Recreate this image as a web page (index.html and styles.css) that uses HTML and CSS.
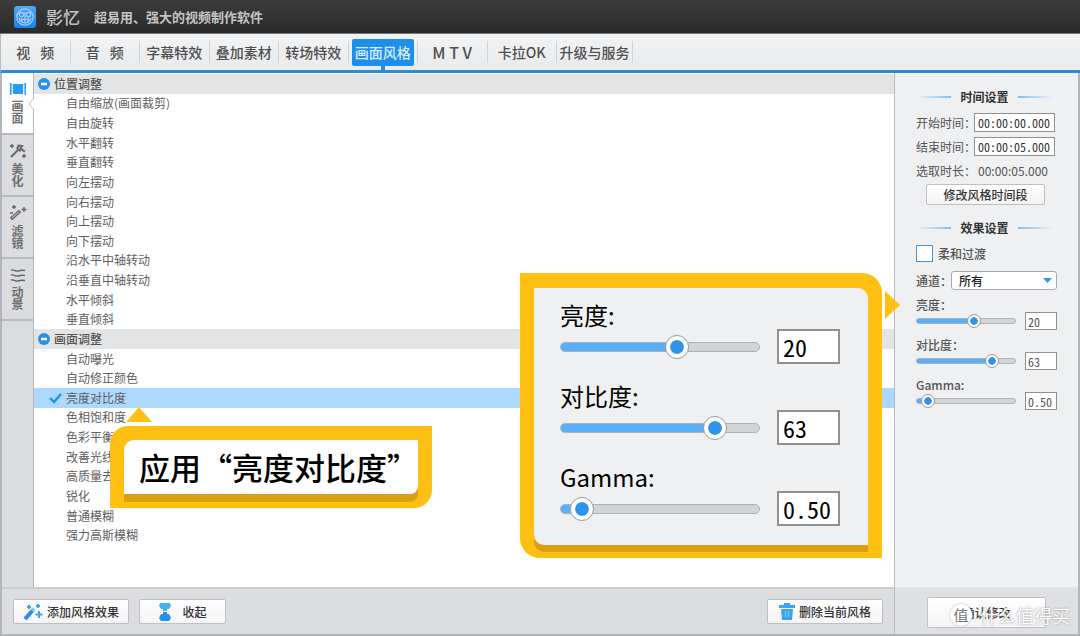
FILE: index.html
```html
<!DOCTYPE html>
<html lang="zh-CN">
<head>
<meta charset="utf-8">
<title>影忆</title>
<link rel="stylesheet" href="styles.css">
</head>
<body>
<div class="window">
  <header class="titlebar">
    <svg class="logo" viewBox="0 0 22 22" aria-hidden="true">
      <defs><linearGradient id="lg" x1="0" y1="0" x2="0" y2="1"><stop offset="0" stop-color="#4fa5f8"/><stop offset="1" stop-color="#1c82ee"/></linearGradient></defs>
      <rect width="22" height="22" rx="3" fill="url(#lg)"/>
      <g fill="none" stroke="#a5d3ff" stroke-width="1.2">
        <circle cx="11" cy="11" r="8.2"/>
        <circle cx="7.6" cy="8.6" r="2.2"/><circle cx="14.4" cy="8.6" r="2.2"/>
        <path d="M7 13.5h8M8 12v4M14 12v4M11 6v10M5 12c1 3 3 5 6 5s5-2 6-5"/>
      </g>
    </svg>
    <span class="brand">影忆</span>
    <span class="tagline">超易用、强大的视频制作软件</span>
  </header>

  <nav class="nav">
    <div class="nav-main">
      <button class="nav-item">视&ensp;&thinsp;频</button>
      <button class="nav-item">音&ensp;&thinsp;频</button>
      <button class="nav-item">字幕特效</button>
      <button class="nav-item">叠加素材</button>
      <button class="nav-item">转场特效</button>
      <button class="nav-item active"><span class="nav-pill">画面风格</span></button>
      <button class="nav-item">M&nbsp;T&nbsp;V</button>
      <button class="nav-item">卡拉OK</button>
    </div>
    <button class="nav-item nav-last">升级与服务</button>
  </nav>

  <div class="columns">
    <div class="left">
      <div class="work">
        <div class="sidebar">
          <button class="side-tab active">
            <svg width="18" height="14" viewBox="0 0 18 14" fill="#2b9af0" aria-hidden="true"><path d="M4 2h10v10H4zM1 1h1.500v12H1zM15.500 1H17v12h-1.500z"/><path d="M2.500 3h1M2.500 6h1M2.500 9h1M14.500 3h1M14.500 6h1M14.500 9h1" stroke="#2b9af0"/></svg>
            <span>画面</span>
          </button>
          <button class="side-tab">
            <svg width="18" height="16" viewBox="0 0 18 16" fill="none" stroke="#666" stroke-width="1.500" aria-hidden="true"><path d="m2 14 7-7" stroke-width="2"/><path d="M8 6l1.500-3.500L13 3l-1.500 2L14 7.500l2 1M8 6l4 2" stroke-width="2"/><path d="M3 1v4M1 3h4M15 11v4M13 13h4"/></svg>
            <span>美化</span>
          </button>
          <button class="side-tab">
            <svg width="18" height="16" viewBox="0 0 18 16" fill="none" stroke="#666" aria-hidden="true"><path d="m2 14 9-8" stroke-width="3.500"/><path d="m3 13 7-6.200" stroke="#ddd"/><path d="M5 0v4M3 2h4M15 2v5M12.500 4.500h5M1 8h3" stroke-width="1.400"/></svg>
            <span>滤镜</span>
          </button>
          <button class="side-tab">
            <svg width="18" height="14" viewBox="0 0 18 14" fill="none" stroke="#666" stroke-width="1.400" aria-hidden="true"><path d="M2 2c4-1 4 2 7 1s4-1 7-.5M2 7c4-1 4 2 7 1s4-1 7-.5M2 12c4-1 4 2 7 1s4-1 7-.5"/></svg>
            <span>动景</span>
          </button>
          <svg class="notch" viewBox="0 0 6 12" aria-hidden="true"><path d="M6 0 1 6l5 6" fill="#fff" stroke="#bbb"/></svg>
        </div>
        <div class="tree">
          <section class="group group-position">
            <h2 class="group-head"><svg class="minus" viewBox="0 0 12 12" aria-hidden="true"><circle cx="6" cy="6" r="6" fill="#2492e8"/><path d="M3 6h6" stroke="#fff" stroke-width="2.500"/></svg>位置调整</h2>
            <button class="row">自由缩放(画面裁剪)</button>
            <button class="row">自由旋转</button>
            <button class="row">水平翻转</button>
            <button class="row">垂直翻转</button>
            <button class="row">向左摆动</button>
            <button class="row">向右摆动</button>
            <button class="row">向上摆动</button>
            <button class="row">向下摆动</button>
            <button class="row">沿水平中轴转动</button>
            <button class="row">沿垂直中轴转动</button>
            <button class="row">水平倾斜</button>
            <button class="row">垂直倾斜</button>
          </section>
          <section class="group group-picture">
            <h2 class="group-head"><svg class="minus" viewBox="0 0 12 12" aria-hidden="true"><circle cx="6" cy="6" r="6" fill="#2492e8"/><path d="M3 6h6" stroke="#fff" stroke-width="2.500"/></svg>画面调整</h2>
            <button class="row">自动曝光</button>
            <button class="row">自动修正颜色</button>
            <button class="row selected"><svg class="tick" viewBox="0 0 13 12" aria-hidden="true"><path d="m1 6 4 4 7-8" fill="none" stroke="#1c92e4" stroke-width="2.400"/></svg>亮度对比度</button>
            <button class="row">色相饱和度</button>
            <button class="row">色彩平衡</button>
            <button class="row">改善光线</button>
            <button class="row">高质量去噪</button>
            <button class="row">锐化</button>
            <button class="row">普通模糊</button>
            <button class="row">强力高斯模糊</button>
          </section>
        </div>
      </div>
      <footer class="footer">
        <button class="btn btn-wide"><svg width="20" height="18" viewBox="0 0 20 18" aria-hidden="true"><path d="m2 16 8-9" stroke="#2a8be6" stroke-width="4"/><path d="m9 8 2-2.500" stroke="#7cc4fa" stroke-width="4"/><path d="M16 8v7M12.500 11.500h7M6 2v4M4 4h4M15 1v4M13 3h4" stroke="#3fa4f2" stroke-width="2"/></svg>添加风格效果</button>
        <button class="btn btn-fold"><svg width="14" height="18" viewBox="0 0 14 18" aria-hidden="true"><path d="M2 0h10l1 3-2 3H9v2H5V6H3L1 3z" fill="#48b0f4"/><path d="M5 9h4v2h2l2 4-2 3H3l-2-3 2-4h2z" fill="#2590ea"/></svg>收起</button>
        <button class="btn btn-wide btn-delete"><svg width="16" height="17" viewBox="0 0 16 17" aria-hidden="true"><path d="M5 0h6v2h5v3H0V2h5zM2 6h12l-1 11H3z" fill="#39a4f3"/><path d="M6.500 8v6M9.500 8v6" stroke="#8accfa"/></svg>删除当前风格</button>
      </footer>
    </div>

    <aside class="right">
      <form class="panel">
        <h3 class="section-title">时间设置</h3>
        <div class="time-row"><label for="start">开始时间：</label><input class="time" id="start" value="00:00:00.000"></div>
        <div class="time-row"><label for="end">结束时间：</label><input class="time" id="end" value="00:00:05.000"></div>
        <div class="time-row"><span>选取时长：</span><span class="duration">00:00:05.000</span></div>
        <button type="button" class="btn btn-range">修改风格时间段</button>
        <h3 class="section-title">效果设置</h3>
        <label class="soft"><input type="checkbox" class="check">柔和过渡</label>
        <div class="channel"><label for="channel">通道：</label><select id="channel"><option>所有</option></select></div>
        <div class="param">
          <label for="bright">亮度：</label>
          <input type="range" class="slider" id="bright" min="-100" max="100" value="20" style="--val:60%">
          <input class="num" aria-label="亮度值" value="20">
        </div>
        <div class="param">
          <label for="contrast">对比度：</label>
          <input type="range" class="slider" id="contrast" min="-100" max="100" value="63" style="--val:81%">
          <input class="num" aria-label="对比度值" value="63">
        </div>
        <div class="param">
          <label for="gamma">Gamma:</label>
          <input type="range" class="slider" id="gamma" min="0" max="10" step="0.1" value="0.5" style="--val:5%">
          <input class="num" aria-label="Gamma值" value="0.50">
        </div>
      </form>
      <div class="confirm">
        <button class="btn btn-confirm">确认修改</button>
        <div class="watermark"><span class="mark-dot">值</span>什么值得买</div>
      </div>
    </aside>
  </div>

  <div class="callout tip"><div class="tip-inner">应用“亮度对比度”</div></div>

  <div class="callout zoom">
    <div class="zoom-inner">
      <div class="param big">
        <label for="bright2">亮度:</label>
        <input type="range" class="slider" id="bright2" min="-100" max="100" value="20" style="--val:60%">
        <input class="num" aria-label="亮度值" value="20">
      </div>
      <div class="param big">
        <label for="contrast2">对比度:</label>
        <input type="range" class="slider" id="contrast2" min="-100" max="100" value="63" style="--val:81%">
        <input class="num" aria-label="对比度值" value="63">
      </div>
      <div class="param big">
        <label for="gamma2">Gamma:</label>
        <input type="range" class="slider" id="gamma2" min="0" max="10" step="0.1" value="0.5" style="--val:5%">
        <input class="num" aria-label="Gamma值" value="0.50">
      </div>
    </div>
  </div>
</div>
</body>
</html>
```
FILE: styles.css
```css
* { box-sizing: border-box; }

body {
  margin: 0;
  font-family: "Noto Sans CJK SC", sans-serif;
  font-size: 12px;
  color: #555;
}

button, input, select { font: inherit; color: inherit; margin: 0; padding: 0; }
button { border: 0; background: none; }
h2, h3 { margin: 0; font-size: 12px; }

.window {
  position: relative;
  display: flex;
  flex-direction: column;
  min-height: 100vh;
}

/* Title bar */
.titlebar {
  display: flex;
  align-items: center;
  height: 34px;
  padding: 0 14px;
  background: linear-gradient(#3c3c3c, #2a2a2a);
  border-bottom: 1px solid #777;
  color: #c4c4c4;
}
.logo { width: 22px; height: 22px; }
.brand { margin-left: 10px; font-size: 17px; font-weight: 500; }
.tagline { margin-left: 14px; font-size: 13px; font-weight: 700; }

/* Navigation */
.nav {
  display: flex;
  align-items: center;
  height: 39px;
  background: linear-gradient(#f2f3f5, #e9eaec);
  border-left: 1px solid #bbb;
  border-bottom: 3px solid #2d8cda;
}
.nav-main {
  display: grid;
  grid-template-columns: repeat(8, 1fr);
  width: 556px;
}
.nav-item {
  display: flex;
  align-items: center;
  justify-content: center;
  height: 22px;
  border-right: 1px solid #d2d3d5;
  font-size: 14px;
  font-weight: 500;
  white-space: nowrap;
  color: #505050;
}
.nav-main .nav-item:nth-child(7) { font-size: 16px; }
.nav-last { width: 76px; }
.nav-pill {
  position: relative;
  padding: 0 3px;
  line-height: 27px;
  border-radius: 2px;
  background: #1e8ee9;
  color: #d9efff;
}
.nav-pill::after {
  content: "";
  position: absolute;
  left: 50%;
  top: 100%;
  width: 4px;
  height: 7px;
  margin-left: -2px;
  background: #1e8ee9;
}

.columns { display: flex; flex: 1; border: solid #b4b5b8; border-width: 0 2px 2px; }
.left { display: flex; flex: 1; flex-direction: column; }
.work { display: flex; flex: 1; }

/* Vertical tabs */
.sidebar {
  position: relative;
  width: 32px;
  background: #dadce0;
  border-right: 1px solid #b5b6b9;
}
.side-tab {
  display: flex;
  flex-direction: column;
  align-items: center;
  justify-content: center;
  gap: 4px;
  width: 100%;
  height: 62px;
  padding: 0 6px;
  border-bottom: 2px solid #b9babd;
  font-weight: 700;
  line-height: 12px;
  color: #707070;
}
.side-tab span { width: 12px; word-break: break-all; }
.side-tab.active { background: #fff; }
.notch { position: absolute; top: 25px; right: -1px; width: 6px; height: 12px; }

/* Effect tree */
.tree {
  display: flex;
  flex: 1;
  flex-direction: column;
  padding: 1px 0 42px;
  background: #fff;
}
.group { display: grid; grid-auto-rows: 1fr; min-height: 0; }
.group-position { flex: 13 1 0; }
.group-picture { flex: 11 1 0; }
.group-head, .row {
  display: flex;
  align-items: center;
  min-height: 0;
  line-height: 18px;
}
.group-head {
  gap: 4px;
  padding-left: 4px;
  background: #e3e4e5;
  font-weight: 500;
}
.minus { width: 12px; height: 12px; }
.row { position: relative; padding-left: 32px; color: #606060; }
.row.selected { background: #abd9ff; }
.tick { position: absolute; left: 15px; width: 13px; height: 12px; }

/* Buttons */
.btn {
  display: flex;
  align-items: center;
  justify-content: center;
  height: 25px;
  border: 1px solid #bfc0c2;
  border-radius: 2px;
  background: linear-gradient(#fff, #f4f4f5);
  font-weight: 500;
  color: #333;
  white-space: nowrap;
}
.footer {
  display: flex;
  align-items: center;
  gap: 10px;
  height: 47px;
  padding: 0 11px;
  background: #dcdde1;
  border-top: 2px solid #cbccd0;
}
.btn-wide { gap: 4px; width: 116px; }
.btn-fold { gap: 10px; width: 87px; }
.btn-delete { margin-left: auto; }

/* Settings panel */
.right {
  display: flex;
  flex-direction: column;
  width: 184px;
  background: #eff0f2;
  border-left: 1px solid #b9babc;
}
.panel { flex: 1; padding: 15px 21px 0; }
.section-title {
  display: grid;
  grid-template-columns: 35px 1fr 35px;
  align-items: center;
  margin-right: 4px;
  line-height: 18px;
  text-align: center;
  color: #333;
}
.section-title::before, .section-title::after {
  content: "";
  height: 2px;
  background: linear-gradient(to right, transparent, #7ec0f5);
}
.section-title::after { background: linear-gradient(to left, transparent, #7ec0f5); }
.time-row {
  display: flex;
  align-items: center;
  height: 24px;
  white-space: nowrap;
}
.section-title + .time-row { margin-top: 4px; }
.time-row label, .time-row span:first-child { width: 58px; }
.time {
  width: 81px;
  height: 19px;
  padding-left: 3px;
  border: 1px solid #8f8f8f;
  background: #fff;
  font-feature-settings: "hwid";
  color: #333;
}
.duration { padding-left: 4px; }
.btn-range { width: 119px; height: 21px; margin: 2px 0 14px 10px; }
.soft {
  display: flex;
  align-items: center;
  gap: 5px;
  height: 17px;
  margin-top: 8px;
  font-weight: 500;
}
.check {
  appearance: none;
  width: 17px;
  height: 17px;
  border: 1px solid #4496d6;
  background: #fff;
}
.channel {
  display: flex;
  align-items: center;
  height: 19px;
  margin: 9px 0 8px;
  white-space: nowrap;
  font-weight: 500;
}
.channel label { width: 35px; }
.channel select {
  flex: 1;
  height: 19px;
  padding-left: 7px;
  appearance: none;
  border: 1px solid #a9a9ab;
  border-radius: 3px;
  background: #fff url("data:image/svg+xml,%3Csvg xmlns='http://www.w3.org/2000/svg' width='9' height='5'%3E%3Cpath d='M0 0h9L4.500 5z' fill='%232b9af0'/%3E%3C/svg%3E") no-repeat right 4px center;
  color: #222;
}

/* Slider with its value box */
.param {
  --track: 6px;
  --thumb: 14px;
  display: grid;
  grid-template: 14px 18px / 100px 32px;
  justify-content: space-between;
  align-items: center;
  height: 40px;
  font-weight: 500;
}
.param label { grid-column: 1 / -1; line-height: 14px; }
.slider {
  appearance: none;
  width: 100%;
  height: var(--thumb);
  background: none;
}
.slider::-webkit-slider-runnable-track {
  height: var(--track);
  border: 1px solid #aeb0b3;
  border-radius: 5px;
  background: linear-gradient(#58b0fb, #58b0fb) no-repeat 0 0 / var(--val) 100% border-box #d3d4d6;
}
.slider::-webkit-slider-thumb {
  appearance: none;
  width: var(--thumb);
  height: var(--thumb);
  margin-top: calc((var(--track) - var(--thumb)) / 2 - 1px);
  border: 1px solid #9a9a9a;
  border-radius: 50%;
  background: radial-gradient(closest-side, #2f93ea 58%, #fff 66%);
}
.num {
  width: 100%;
  height: 18px;
  padding-left: 2px;
  border: 1px solid #909090;
  background: #fff;
  font-weight: 400;
  font-feature-settings: "hwid";
}

.confirm {
  position: relative;
  height: 47px;
  padding: 8px 32px;
  background: #dfe0e3;
  border-top: 2px solid #e3e4e6;
}
.btn-confirm { width: 119px; height: 31px; }
.watermark {
  position: absolute;
  right: 8px;
  top: 15px;
  display: flex;
  align-items: center;
  gap: 8px;
  font-size: 18px;
  line-height: 22px;
  white-space: nowrap;
  color: #fff;
  text-shadow: 0 0 2px #888;
}
.mark-dot {
  width: 22px;
  height: 22px;
  border-radius: 50%;
  background: #fff;
  box-shadow: 0 0 2px #aaa;
  font-size: 15px;
  text-align: center;
  color: #777;
  text-shadow: none;
}

/* Callouts */
.callout { position: absolute; background: #ffc013; color: #000; }
.callout::before { content: ""; position: absolute; border: solid transparent; }
.tip {
  left: 110px;
  top: 426px;
  padding: 14px;
  border-radius: 18px 0 18px 0;
}
.tip::before {
  left: 16px;
  top: -19px;
  border-width: 0 13px 15px;
  border-bottom-color: #ffc013;
}
.tip-inner {
  padding-left: 15px;
  border-radius: 10px 0 8px 0;
  background: #fff;
  box-shadow: 0 8px #dba012;
  font-size: 31px;
  font-weight: 500;
  line-height: 54px;
  white-space: nowrap;
}
.zoom {
  right: 198px;
  top: 273px;
  padding: 15px 14px 13px;
  border-radius: 0 20px 0 20px;
}
.zoom::before {
  right: -18px;
  top: 18px;
  border-width: 14px 0 14px 15px;
  border-left-color: #ffc013;
}
.zoom-inner {
  padding: 12px 28px 2px 26px;
  border-radius: 0 10px 0 10px;
  background: #eff0f2;
  box-shadow: 0 7px #dba012;
}
.big {
  --track: 10px;
  --thumb: 24px;
  grid-template: 29px 35px / 200px 63px;
  align-content: start;
  column-gap: 17px;
  height: 81px;
  font-size: 24px;
  font-weight: 400;
}
.big label { line-height: 28px; }
.big .num { height: 35px; padding-left: 4px; border-width: 2px; }
```
